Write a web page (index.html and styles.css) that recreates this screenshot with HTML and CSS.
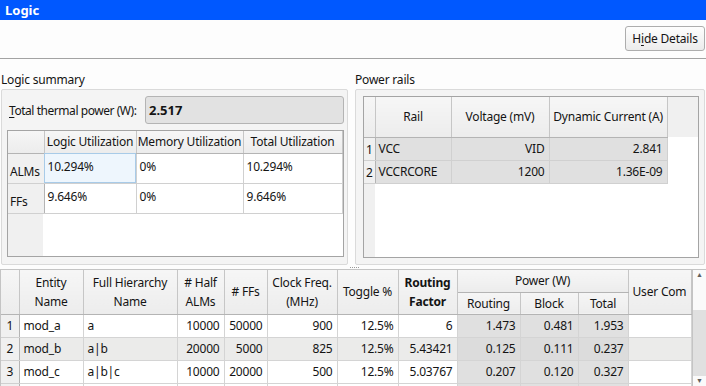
FILE: index.html
```html
<!DOCTYPE html>
<html lang="en">
<head>
    <meta charset="UTF-8">
    <title>Logic</title>
    <link rel="stylesheet" href="styles.css">
</head>
<body>
    <div class="titlebar">Logic</div>

    <div class="toolbar">
        <button class="btn">H<u>i</u>de Details</button>
    </div>

    <div class="summary">
        <div class="col col-left">
            <div class="group-label">Logic summary</div>
            <div class="group">
                <div class="thermal">
                    <span class="thermal-label"><u>T</u>otal thermal power (W):</span>
                    <div class="thermal-field">2.517</div>
                </div>
                <div class="grid-wrap logic-wrap">
                    <table class="grid logic-grid">
                        <colgroup>
                            <col style="width:36px">
                            <col style="width:92px">
                            <col style="width:107px">
                            <col style="width:99px">
                        </colgroup>
                        <tr class="head">
                            <th></th>
                            <th>Logic Utilization</th>
                            <th>Memory Utilization</th>
                            <th>Total Utilization</th>
                        </tr>
                        <tr>
                            <th class="rowhead">ALMs</th>
                            <td class="selected">10.294%</td>
                            <td>0%</td>
                            <td>10.294%</td>
                        </tr>
                        <tr>
                            <th class="rowhead">FFs</th>
                            <td>9.646%</td>
                            <td>0%</td>
                            <td>9.646%</td>
                        </tr>
                    </table>
                </div>
            </div>
        </div>

        <div class="col col-right">
            <div class="group-label">Power rails</div>
            <div class="group group-rails">
                <div class="grid-wrap rails-wrap">
                    <table class="grid rails-grid">
                        <colgroup>
                            <col style="width:11px">
                            <col style="width:76px">
                            <col style="width:98px">
                            <col style="width:118px">
                        </colgroup>
                        <tr class="head">
                            <th></th>
                            <th>Rail</th>
                            <th>Voltage (mV)</th>
                            <th>Dynamic Current (A)</th>
                        </tr>
                        <tr>
                            <th class="rownum">1</th>
                            <td class="ro">VCC</td>
                            <td class="ro num">VID</td>
                            <td class="ro num">2.841</td>
                        </tr>
                        <tr>
                            <th class="rownum">2</th>
                            <td class="ro">VCCRCORE</td>
                            <td class="ro num">1200</td>
                            <td class="ro num">1.36E-09</td>
                        </tr>
                    </table>
                </div>
            </div>
        </div>
    </div>

    <div class="splitter"><span class="grip"></span></div>

    <div class="details">
        <table class="grid detail-grid">
            <colgroup>
                <col style="width:18px">
                <col style="width:64px">
                <col style="width:94px">
                <col style="width:47px">
                <col style="width:43px">
                <col style="width:70px">
                <col style="width:61px">
                <col style="width:59px">
                <col style="width:63px">
                <col style="width:58px">
                <col style="width:50px">
                <col style="width:63px">
            </colgroup>
            <tr class="head">
                <th rowspan="2"></th>
                <th rowspan="2">Entity<br>Name</th>
                <th rowspan="2">Full Hierarchy<br>Name</th>
                <th rowspan="2"># Half<br>ALMs</th>
                <th rowspan="2"># FFs</th>
                <th rowspan="2">Clock Freq.<br>(MHz)</th>
                <th rowspan="2">Toggle %</th>
                <th rowspan="2" class="bold">Routing<br>Factor</th>
                <th colspan="3" class="group-head">Power (W)</th>
                <th rowspan="2" class="clip">User Com</th>
            </tr>
            <tr class="head">
                <th class="sub">Routing</th>
                <th class="sub">Block</th>
                <th class="sub">Total</th>
            </tr>
            <tr>
                <th class="rownum">1</th>
                <td>mod_a</td>
                <td>a</td>
                <td class="num">10000</td>
                <td class="num">50000</td>
                <td class="num">900</td>
                <td class="num">12.5%</td>
                <td class="num">6</td>
                <td class="num ro">1.473</td>
                <td class="num ro">0.481</td>
                <td class="num ro">1.953</td>
                <td></td>
            </tr>
            <tr class="alt">
                <th class="rownum">2</th>
                <td>mod_b</td>
                <td>a|b</td>
                <td class="num">20000</td>
                <td class="num">5000</td>
                <td class="num">825</td>
                <td class="num">12.5%</td>
                <td class="num">5.43421</td>
                <td class="num ro">0.125</td>
                <td class="num ro">0.111</td>
                <td class="num ro">0.237</td>
                <td></td>
            </tr>
            <tr>
                <th class="rownum">3</th>
                <td>mod_c</td>
                <td>a|b|c</td>
                <td class="num">10000</td>
                <td class="num">20000</td>
                <td class="num">500</td>
                <td class="num">12.5%</td>
                <td class="num">5.03767</td>
                <td class="num ro">0.207</td>
                <td class="num ro">0.120</td>
                <td class="num ro">0.327</td>
                <td></td>
            </tr>
            <tr>
                <th class="rownum"></th>
                <td></td><td></td><td></td><td></td><td></td><td></td>
                <td></td><td class="ro"></td><td class="ro"></td><td class="ro"></td><td></td>
            </tr>
        </table>
        <div class="scrollbar">
            <div class="arrow">&#9650;</div>
            <div class="track"></div>
            <div class="thumb"></div>
            <div class="arrow">&#9660;</div>
        </div>
    </div>
</body>
</html>
```

FILE: styles.css
```css
body {
    margin: 0;
    width: 706px;
    height: 386px;
    overflow: hidden;
    background-color: #fdfdfd;
    color: #141414;
    font-family: "Noto Sans", "Open Sans", sans-serif;
    font-size: 12px;
    letter-spacing: -0.2px;
}
u {
    text-decoration: underline;
    text-underline-offset: 2px;
}
.titlebar {
    height: 20px;
    line-height: 20px;
    padding-left: 5px;
    background-color: #0058ff;
    color: white;
    font-weight: bold;
    font-size: 13px;
    letter-spacing: 0;
}
.toolbar {
    height: 39px;
    border-bottom: 1px solid #a3a3a3;
    display: flex;
    justify-content: flex-end;
    align-items: flex-start;
    padding-top: 6px;
    box-sizing: border-box;
}
.btn {
    height: 25px;
    width: 80px;
    margin-right: 1px;
    border: 1px solid #adadad;
    border-radius: 3px;
    background: linear-gradient(#fefefe, #ececec);
    font-family: inherit;
    font-size: 12px;
    letter-spacing: -0.2px;
    color: #141414;
    padding: 0;
}
.summary {
    display: flex;
    height: 207px;
}
.col {
    display: flex;
    flex-direction: column;
}
.col-left {
    width: 347px;
    padding-left: 1px;
}
.col-right {
    width: 350px;
    margin-left: 7px;
}
.group-label {
    height: 30px;
    line-height: 14px;
    padding-top: 14px;
    box-sizing: border-box;
}
.group {
    height: 176px;
    border: 1px solid #dadada;
    border-radius: 2px;
    background-color: #f4f4f4;
    box-sizing: border-box;
    padding: 6px 3px 6px 5px;
}
.group-rails {
    padding: 6px 5px 6px 7px;
}
.thermal {
    display: flex;
    align-items: center;
    height: 28px;
    margin-bottom: 6px;
}
.thermal-label {
    width: 136px;
    padding-left: 2px;
    white-space: nowrap;
    letter-spacing: -0.45px;
}
.thermal-field {
    flex: 1;
    height: 28px;
    line-height: 26px;
    box-sizing: border-box;
    border: 1px solid #b4b4b4;
    border-radius: 3px;
    background-color: #e2e2e2;
    padding-left: 3px;
    font-weight: bold;
    font-size: 13px;
    letter-spacing: 0;
}
.grid-wrap {
    border: 1px solid #a4a4a4;
    background-color: white;
    box-sizing: border-box;
}
.logic-wrap {
    height: 127px;
    width: 337px;
    background: linear-gradient(to right, #f0f0f0 35px, white 35px);
}
.rails-wrap {
    height: 162px;
    background:
        linear-gradient(#f0f0f0 40px, transparent 40px),
        linear-gradient(to right, #f0f0f0 11px, white 11px);
}
.grid {
    border-collapse: collapse;
    table-layout: fixed;
}
.grid th, .grid td {
    padding: 0 3px;
    white-space: nowrap;
    overflow: hidden;
    font-weight: normal;
    box-sizing: border-box;
}
.grid .head th {
    background: linear-gradient(#f6f6f6, #ececec);
    text-align: center;
    border-right: 1px solid #c6c6c6;
    border-bottom: 1px solid #b4b4b4;
}
.logic-grid {
    width: 334px;
}
.logic-grid .head th {
    height: 22px;
    padding: 0 1px;
}
.logic-grid td {
    height: 30px;
    vertical-align: top;
    padding-top: 4px;
    border-right: 1px solid #d0d0d0;
    border-bottom: 1px solid #d0d0d0;
}
.logic-grid .rowhead {
    background-color: #f0f0f0;
    border-right: 1px solid #b4b4b4;
    border-bottom: 1px solid #d0d0d0;
    text-align: left;
    padding: 6px 0 0 2px;
}
.logic-grid .selected {
    background-color: #eef6fd;
    outline: 1px solid #a8cbe8;
    outline-offset: -1px;
}
.rails-grid {
    width: 303px;
}
.rails-grid .head th {
    height: 40px;
}
.rails-grid td {
    height: 23px;
    border-right: 1px solid #d0d0d0;
    border-bottom: 1px solid #d0d0d0;
}
.grid .rownum {
    background-color: #f0f0f0;
    border-right: 1px solid #b4b4b4;
    border-bottom: 1px solid #d0d0d0;
    text-align: center;
    padding: 0;
    vertical-align: bottom;
    padding-bottom: 2px;
}
.grid .ro {
    background-color: #e0e0e0;
}
.grid .num {
    text-align: right;
    padding-right: 4px;
}
.splitter {
    height: 3px;
    display: flex;
    justify-content: center;
    align-items: center;
    padding-left: 2px;
}
.grip {
    width: 9px;
    border-top: 1px dotted #9a9a9a;
}
.details {
    display: flex;
    border-top: 1px solid #c4c4c4;
    border-left: 1px solid #c4c4c4;
    height: 116px;
    overflow: hidden;
    background-color: white;
}
.detail-grid {
    width: 690px;
    flex: none;
}
.detail-grid .head th {
    height: 22px;
    line-height: 19px;
}
.detail-grid .head .bold {
    font-weight: bold;
}
.detail-grid .head .clip {
    text-align: left;
    padding-left: 4px;
    text-overflow: clip;
}
.detail-grid .group-head {
    border-bottom: 1px solid #c6c6c6;
}
.detail-grid td {
    height: 23px;
    border-right: 1px solid #d4d4d4;
    border-bottom: 1px solid #d4d4d4;
    padding-left: 4px;
}
.detail-grid .rownum {
    vertical-align: middle;
    padding: 0;
}
.detail-grid .alt td {
    background-color: #ebebea;
}
.detail-grid .alt td.ro {
    background-color: #dcdcdc;
}
.scrollbar {
    flex: 1;
    display: flex;
    flex-direction: column;
    border-left: 1px solid #c4c4c4;
    background-color: #fafafa;
}
.arrow {
    height: 10px;
    line-height: 10px;
    font-size: 7px;
    text-align: center;
    color: #606060;
}
.track {
    height: 30px;
}
.thumb {
    flex: 1;
    background-color: #e0e0e0;
}
```
